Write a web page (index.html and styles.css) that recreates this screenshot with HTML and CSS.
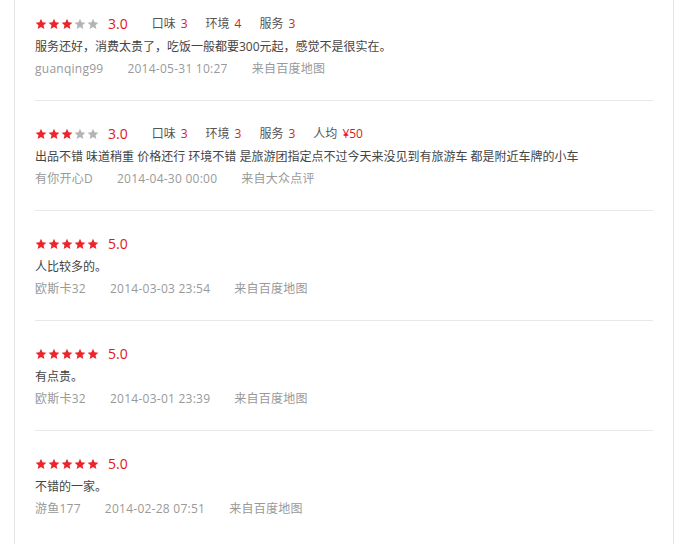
FILE: index.html
```html
<!DOCTYPE html>
<html lang="zh-CN">
<head>
<meta charset="utf-8">
<title>评论</title>
<link rel="stylesheet" href="styles.css">
</head>
<body>
<svg width="0" height="0" class="defs" aria-hidden="true">
  <defs>
    <symbol id="star" viewBox="0 0 24 24">
      <polygon points="12,1.5 15.1,8.6 22.8,9.3 17,14.4 18.7,22 12,18 5.3,22 7,14.4 1.2,9.3 8.9,8.6"/>
    </symbol>
  </defs>
</svg>
<div class="panel">
  <ul class="reviews">
    <li class="review">
      <div class="score-row">
        <span class="stars">
          <svg class="star on"><use href="#star"/></svg><svg class="star on"><use href="#star"/></svg><svg class="star on"><use href="#star"/></svg><svg class="star"><use href="#star"/></svg><svg class="star"><use href="#star"/></svg>
        </span>
        <span class="score">3.0</span>
        <span class="sub">口味<em>3</em></span>
        <span class="sub">环境<em>4</em></span>
        <span class="sub">服务<em>3</em></span>
      </div>
      <p class="comment">服务还好，消费太贵了，吃饭一般都要300元起，感觉不是很实在。</p>
      <div class="meta"><span>guanqing99</span><span>2014-05-31 10:27</span><span>来自百度地图</span></div>
    </li>
    <li class="review">
      <div class="score-row">
        <span class="stars">
          <svg class="star on"><use href="#star"/></svg><svg class="star on"><use href="#star"/></svg><svg class="star on"><use href="#star"/></svg><svg class="star"><use href="#star"/></svg><svg class="star"><use href="#star"/></svg>
        </span>
        <span class="score">3.0</span>
        <span class="sub">口味<em>3</em></span>
        <span class="sub">环境<em>3</em></span>
        <span class="sub">服务<em>3</em></span>
        <span class="sub">人均<em>¥50</em></span>
      </div>
      <p class="comment">出品不错 味道稍重 价格还行 环境不错 是旅游团指定点不过今天来没见到有旅游车 都是附近车牌的小车</p>
      <div class="meta"><span>有你开心D</span><span>2014-04-30 00:00</span><span>来自大众点评</span></div>
    </li>
    <li class="review">
      <div class="score-row">
        <span class="stars">
          <svg class="star on"><use href="#star"/></svg><svg class="star on"><use href="#star"/></svg><svg class="star on"><use href="#star"/></svg><svg class="star on"><use href="#star"/></svg><svg class="star on"><use href="#star"/></svg>
        </span>
        <span class="score">5.0</span>
      </div>
      <p class="comment">人比较多的。</p>
      <div class="meta"><span>欧斯卡32</span><span>2014-03-03 23:54</span><span>来自百度地图</span></div>
    </li>
    <li class="review">
      <div class="score-row">
        <span class="stars">
          <svg class="star on"><use href="#star"/></svg><svg class="star on"><use href="#star"/></svg><svg class="star on"><use href="#star"/></svg><svg class="star on"><use href="#star"/></svg><svg class="star on"><use href="#star"/></svg>
        </span>
        <span class="score">5.0</span>
      </div>
      <p class="comment">有点贵。</p>
      <div class="meta"><span>欧斯卡32</span><span>2014-03-01 23:39</span><span>来自百度地图</span></div>
    </li>
    <li class="review">
      <div class="score-row">
        <span class="stars">
          <svg class="star on"><use href="#star"/></svg><svg class="star on"><use href="#star"/></svg><svg class="star on"><use href="#star"/></svg><svg class="star on"><use href="#star"/></svg><svg class="star on"><use href="#star"/></svg>
        </span>
        <span class="score">5.0</span>
      </div>
      <p class="comment">不错的一家。</p>
      <div class="meta"><span>游鱼177</span><span>2014-02-28 07:51</span><span>来自百度地图</span></div>
    </li>
  </ul>
</div>
</body>
</html>
```
FILE: styles.css
```css
html, body {
  margin: 0;
  padding: 0;
  background: #fff;
  height: 100%;
}
body {
  font-family: "Open Sans", "Noto Sans CJK SC", sans-serif;
  font-size: 12px;
  color: #444;
  overflow: hidden;
}
.defs {
  position: absolute;
  width: 0;
  height: 0;
}
.panel {
  margin-left: 14px;
  width: 660px;
  min-height: 100%;
  border-left: 1px solid #e6e6e6;
  border-right: 1px solid #e6e6e6;
  padding: 0 20px;
  box-sizing: border-box;
}
.reviews {
  list-style: none;
  margin: 0;
  padding: 0;
}
.review {
  padding: 21px 0 20px;
  border-bottom: 1px solid #e8e8e8;
}
.review:first-child {
  padding-top: 12px;
}
.review:last-child {
  border-bottom: none;
}
.score-row {
  display: flex;
  align-items: center;
  height: 24px;
}
.stars {
  display: flex;
  gap: 1px;
  margin-right: 9px;
}
.star {
  width: 12px;
  height: 12px;
  fill: #b4b4b4;
}
.star.on {
  fill: #eb252b;
}
.score {
  font-size: 14px;
  color: #e0161d;
  margin-right: 24px;
  line-height: 24px;
}
.sub {
  color: #555;
  margin-right: 18px;
  line-height: 24px;
}
.sub em {
  font-style: normal;
  color: #e0161d;
  margin-left: 5px;
}
.comment {
  margin: 0;
  line-height: 22px;
  color: #444;
}
.meta {
  display: flex;
  gap: 24px;
  line-height: 22px;
  color: #999;
  font-size: 12px;
  letter-spacing: 0.25px;
}
```
